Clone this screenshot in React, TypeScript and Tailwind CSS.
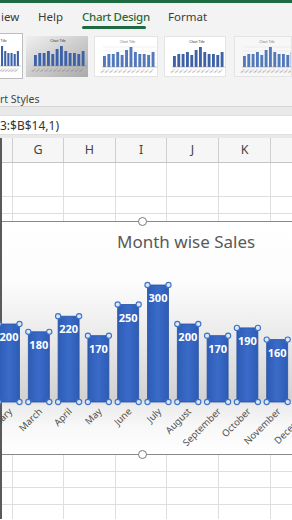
import React from "react"

const COLS = ["w-[11px]", "w-[51px]", "w-[52px]", "w-[51px]", "w-[52px]", "w-[52px]"]
const LETTERS = ["", "G", "H", "I", "J", "K"]

const MONTHS = ["January","February","March","April","May","June","July","August","September","October","November","December"]
const VALUES = [210, 200, 180, 220, 170, 250, 300, 200, 170, 190, 160, 230]

function GridRow({ h, line = true }: { h: string; line?: boolean }) {
  return (
    <div className={`flex ${h} ${line ? "border-b border-[#dedede]" : ""}`}>
      {COLS.map((c, i) => (
        <div key={i} className={`${c} shrink-0 border-r border-[#dedede]`} />
      ))}
      <div className="flex-1" />
    </div>
  )
}

function MiniChart({ w, bars, bg, grid = false, dark = false }: { w: number; bars: number[]; bg: string; grid?: boolean; dark?: boolean }) {
  const step = (w - 12) / bars.length
  return (
    <svg width={w} height={41} viewBox={`0 0 ${w} 41`}>
      <defs>
        <linearGradient id="gbg" x1="0" y1="0" x2="1" y2="1">
          <stop offset="0" stopColor="#f0f0f0" />
          <stop offset="1" stopColor="#a9a9a9" />
        </linearGradient>
      </defs>
      <rect x="0" y="0" width={w} height="41" fill={bg} />
      <text x={w / 2} y="6" fontSize="3.4" textAnchor="middle" fill={dark ? "#333" : "#777"} fontFamily="Liberation Sans, sans-serif">Chart Title</text>
      {grid &&
        [10, 14, 18, 22, 26].map((y) => (
          <line key={y} x1="8" x2={w - 2} y1={y} y2={y} stroke="#e2e2e2" strokeWidth="0.5" />
        ))}
      {bars.map((b, i) => {
        const x = 8 + i * step
        return (
          <g key={i}>
            <rect x={x} y={30 - b} width={step * 0.66} height={b} fill={dark ? "#3d62a8" : "#5379bd"} />
            <text x={x + 2} y="33" fontSize="2.6" fill="#888" transform={`rotate(-45 ${x + 2} 33)`} textAnchor="end" fontFamily="Liberation Sans, sans-serif">Mon</text>
          </g>
        )
      })}
      <line x1="7" x2={w - 3} y1="30" y2="30" stroke="#8a8a8a" strokeWidth="0.5" />
    </svg>
  )
}

const THUMB_BARS = [11, 13, 13, 15, 12, 17, 20, 15, 13, 13, 12, 15]

function Chart() {
  const bottom = 148
  return (
    <div className="relative h-[234px] border-y border-[#8a8a8a] bg-[linear-gradient(to_bottom,#ffffff_0%,#fcfcfc_26%,#e8e8e8_52%,#d2d2d2_76%,#ececec_79%,#f8f8f8_88%,#ffffff_100%)]">
      <div className="pl-[115px] pt-[9px] h-[32px] text-[17px] leading-[22px] text-[#595959]" style={{ fontFamily: "'Noto Sans', sans-serif" }}>
        Month wise Sales
      </div>
      <svg width="290" height="200" viewBox="0 0 290 200" className="block overflow-visible">
        <defs>
          <linearGradient id="bar" x1="0" y1="0" x2="1" y2="0">
            <stop offset="0" stopColor="#2d5cb5" />
            <stop offset="0.5" stopColor="#3a6bc8" />
            <stop offset="1" stopColor="#2d5cb5" />
          </linearGradient>
        </defs>
        {VALUES.map((v, i) => {
          const cx = 7 + 29.8 * (i - 1)
          const top = bottom - v * 0.39
          return (
            <g key={i}>
              <rect x={cx - 10.5} y={top} width="21" height={bottom - top} fill="url(#bar)" stroke="#2a54a4" strokeWidth="0.8" />
              <text x={cx} y={top + 17} textAnchor="middle" fontSize="11" fontWeight="700" fill="#ffffff" fontFamily="'Open Sans', sans-serif">{v}</text>
              {[cx - 10.5, cx + 10.5].map((hx) =>
                [top, bottom].map((hy) => (
                  <circle key={`${hx}-${hy}`} cx={hx} cy={hy} r="2.6" fill="#dbe7f7" stroke="#3a72c8" strokeWidth="1.1" />
                ))
              )}
              <text x={cx + 4} y={bottom + 10} textAnchor="end" fontSize="9.5" fill="#505050" transform={`rotate(-45 ${cx + 4} ${bottom + 10})`} fontFamily="'Noto Sans', sans-serif">
                {MONTHS[i]}
              </text>
            </g>
          )
        })}
      </svg>
      <div className="absolute left-[136px] top-[-5px] w-[9px] h-[9px] rounded-full border-[1.5px] border-[#7a7a7a] bg-white" />
      <div className="absolute left-[136px] bottom-[-5px] w-[9px] h-[9px] rounded-full border-[1.5px] border-[#7a7a7a] bg-white" />
    </div>
  )
}

export default function App() {
  return (
    <div className="w-[292px] h-[520px] overflow-hidden bg-white text-[#444]" style={{ fontFamily: "'Noto Sans', sans-serif" }}>
      <div className="h-[3px] bg-[#1e6b41]" />
      <div className="bg-[#f3f3f3] border-b border-[#d6d6d6]">
        <div className="flex h-[30px] text-[11.5px] text-[#3a3a3a]">
          <div className="w-[38px] pl-[1px] pt-[5px]">iew</div>
          <div className="w-[44px] pt-[5px]">Help</div>
          <div className="w-[86px] pt-[5px]">
            <div className="w-[66px] text-[#1e6b41] font-medium tracking-[-0.3px] whitespace-nowrap">Chart Design</div>
            <div className="w-[64px] h-[3px] mt-[1px] rounded-full bg-[#1e6b41]" />
          </div>
          <div className="pt-[5px]">Format</div>
        </div>
        <div className="flex items-center h-[48px] pb-[2px]">
          <div className="w-[24px] h-[46px] overflow-hidden border border-l-0 border-[#bdbdbd] bg-white flex items-center justify-end">
            <div className="shrink-0 -mr-[2px]">
              <MiniChart w={50} bars={THUMB_BARS} bg="#ffffff" dark />
            </div>
          </div>
          <div className="ml-[3px] w-[64px] h-[41px] overflow-hidden">
            <MiniChart w={64} bars={THUMB_BARS} bg="url(#gbg)" dark />
          </div>
          <div className="ml-[6px] w-[65px] h-[41px] overflow-hidden border border-[#e4e4e4]">
            <MiniChart w={65} bars={THUMB_BARS} bg="#ffffff" grid />
          </div>
          <div className="ml-[6px] w-[64px] h-[41px] overflow-hidden border border-[#e4e4e4]">
            <MiniChart w={64} bars={THUMB_BARS} bg="#ffffff" dark />
          </div>
          <div className="ml-[8px] w-[60px] h-[41px] overflow-hidden border border-[#e4e4e4]">
            <MiniChart w={64} bars={THUMB_BARS} bg="#f7f7f7" grid />
          </div>
        </div>
        <div className="h-[25px] pt-[12px] text-[10.5px] leading-[12px] text-[#444]">rt Styles</div>
      </div>
      <div className="h-[8px] bg-[#e9e9e9]" />
      <div className="h-[20px] pt-[2px] bg-white border-y border-[#e0e0e0] text-[12px] leading-[16px] text-[#333]">3:$B$14,1)</div>
      <div className="h-[3px] bg-[#e9e9e9]" />
      <div className="border-l-2 border-[#5a5a5a]">
        <div className="flex h-[25px] bg-[#f6f6f6] border-b border-[#c4c4c4] text-[12.5px]">
          {COLS.map((c, i) => (
            <div key={i} className={`${c} shrink-0 border-r border-[#cfcfcf] flex items-center justify-center`}>
              {LETTERS[i]}
            </div>
          ))}
          <div className="flex-1" />
        </div>
        <GridRow h="h-[34px]" />
        <GridRow h="h-[17px]" />
        <GridRow h="h-[7px]" line={false} />
        <Chart />
        <GridRow h="h-[17px]" />
        <GridRow h="h-[16px]" />
        <GridRow h="h-[17px]" />
        <GridRow h="h-[14px]" line={false} />
      </div>
    </div>
  )
}
